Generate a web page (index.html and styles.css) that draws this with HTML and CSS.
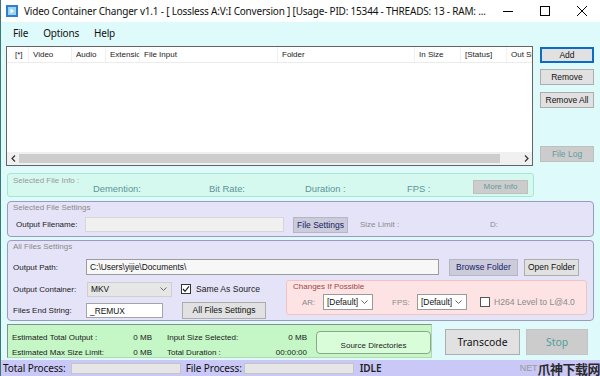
FILE: index.html
```html
<!DOCTYPE html>
<html>
<head>
<meta charset="utf-8">
<title>Video Container Changer</title>
<link rel="stylesheet" href="styles.css">
</head>
<body>
<div class="window">
  <div class="titlebar">
    <svg class="appicon" width="12" height="12" viewBox="0 0 12 12"><rect x="0" y="0" width="12" height="12" fill="#2f7fcf"/><rect x="2" y="2" width="8" height="8" fill="#9ad6f2"/><path d="M4.5 3.5 L8 6 L4.5 8.5 Z" fill="#ffffff"/></svg>
    <span class="title">Video Container Changer v1.1 - [ Lossless A:V:I Conversion ] [Usage- PID: 15344 - THREADS: 13 - RAM: ...</span>
    <div class="winctl">
      <span class="wbtn"><svg width="10" height="10" viewBox="0 0 10 10"><path d="M0 5.5 H10" stroke="#000" stroke-width="1"/></svg></span>
      <span class="wbtn"><svg width="10" height="10" viewBox="0 0 10 10"><rect x="0.5" y="0.5" width="9" height="9" fill="none" stroke="#000" stroke-width="1"/></svg></span>
      <span class="wbtn"><svg width="10" height="10" viewBox="0 0 10 10"><path d="M0 0 L10 10 M10 0 L0 10" stroke="#000" stroke-width="1"/></svg></span>
    </div>
  </div>
  <div class="menubar"><span>File</span><span>Options</span><span>Help</span></div>
  <div class="client">
    <div class="toprow">
      <div class="listview">
        <div class="lvhead">
          <span class="col c1">[*]</span>
          <span class="col c2">Video</span>
          <span class="col c3">Audio</span>
          <span class="col c4">Extension</span>
          <span class="col c5">File Input</span>
          <span class="col c6">Folder</span>
          <span class="col c7">In Size</span>
          <span class="col c8">[Status]</span>
          <span class="col c9">Out Size</span>
        </div>
        <div class="lvbody"></div>
        <div class="hscroll">
          <span class="arr"><svg width="5" height="7" viewBox="0 0 5 7"><path d="M4 0.5 L1 3.5 L4 6.5" fill="none" stroke="#333" stroke-width="1.2"/></svg></span>
          <div class="thumb"></div>
          <div class="track"></div>
          <span class="arr"><svg width="5" height="7" viewBox="0 0 5 7"><path d="M1 0.5 L4 3.5 L1 6.5" fill="none" stroke="#333" stroke-width="1.2"/></svg></span>
        </div>
      </div>
      <div class="sidebtns">
        <button class="btn focus b-add">Add</button>
        <button class="btn b-remove">Remove</button>
        <button class="btn b-removeall">Remove All</button>
        <button class="btn off b-filelog">File Log</button>
      </div>
    </div>

    <div class="infobox">
      <span class="gtitle info-title">Selected File Info :</span>
      <span class="infolbl w-dem">Demention:</span>
      <span class="infolbl w-bit">Bit Rate:</span>
      <span class="infolbl w-dur">Duration :</span>
      <span class="infolbl w-fps">FPS :</span>
      <button class="btn off moreinfo">More Info</button>
    </div>

    <div class="lavbox sfs">
      <div class="gtitle">Selected File Settings</div>
      <div class="row sfs-row">
        <span class="lbl w-ofn">Output Filename:</span>
        <span class="input disabled ofn"></span>
        <button class="btn navy b-fs">File Settings</button>
        <span class="lbl dim w-size">Size Limit :</span>
        <span class="lbl dim">D:</span>
      </div>
    </div>

    <div class="lavbox afs">
      <div class="gtitle">All Files Settings</div>
      <div class="row r-path">
        <span class="lbl w-lab">Output Path:</span>
        <span class="input path">C:\Users\yijie\Documents\</span>
        <button class="btn navy b-browse">Browse Folder</button>
        <button class="btn b-open">Open Folder</button>
      </div>
      <div class="lower">
        <div class="leftcol">
          <div class="row r-cont">
            <span class="lbl w-lab2">Output Container:</span>
            <span class="select flat mkv"><span>MKV</span><svg width="7" height="4" viewBox="0 0 7 4"><path d="M0.5 0.5 L3.5 3.5 L6.5 0.5" fill="none" stroke="#666" stroke-width="1"/></svg></span>
            <span class="check checked"><svg width="8" height="8" viewBox="0 0 8 8"><path d="M1 4 L3 6.3 L7 1.3" fill="none" stroke="#222" stroke-width="1.2"/></svg></span>
            <span class="lbl big">Same As Source</span>
          </div>
          <div class="row r-end">
            <span class="lbl w-lab">Files End String:</span>
            <span class="input endstr">_REMUX</span>
            <button class="btn b-allfs">All Files Settings</button>
          </div>
        </div>
        <div class="pinkbox">
          <div class="ptitle">Changes If Possible</div>
          <div class="row prow">
            <span class="lbl gray w-ar">AR:</span>
            <span class="select def"><span>[Default]</span><svg width="7" height="4" viewBox="0 0 7 4"><path d="M0.5 0.5 L3.5 3.5 L6.5 0.5" fill="none" stroke="#666" stroke-width="1"/></svg></span>
            <span class="lbl gray w-fps2">FPS:</span>
            <span class="select def"><span>[Default]</span><svg width="7" height="4" viewBox="0 0 7 4"><path d="M0.5 0.5 L3.5 3.5 L6.5 0.5" fill="none" stroke="#666" stroke-width="1"/></svg></span>
            <span class="check h264"></span>
            <span class="lbl gray big">H264 Level to L@4.0</span>
          </div>
        </div>
      </div>
    </div>

    <div class="bottomrow">
      <div class="greenbox">
        <div class="stats">
          <div class="srow"><span class="sl">Estimated Total Output :</span><span class="sv">0 MB</span><span class="sl2">Input Size Selected:</span><span class="sv2">0 MB</span></div>
          <div class="srow"><span class="sl">Estimated Max Size Limit:</span><span class="sv">0 MB</span><span class="sl2">Total Duration :</span><span class="sv2">00:00:00</span></div>
        </div>
        <button class="srcdir">Source Directories</button>
      </div>
      <button class="bigbtn transcode">Transcode</button>
      <button class="bigbtn stop">Stop</button>
    </div>
  </div>
  <div class="statusbar">
    <span class="st">Total Process:</span>
    <span class="prog"></span>
    <span class="st st2">File Process:</span>
    <span class="prog"></span>
    <span class="st idle">IDLE</span>
    <span class="net">NET</span><span class="wm">爪神下载网</span>
  </div>
</div>
</body>
</html>
```

FILE: styles.css
```css
* { box-sizing: border-box; }
html, body { margin: 0; padding: 0; }
body { width: 600px; height: 376px; overflow: hidden; }

.window {
  width: 600px; height: 376px;
  background: #dffafa;
  border-left: 1px solid #3a7878;
  display: flex; flex-direction: column;
  font-family: "Liberation Sans", Arial, sans-serif;
  font-size: 8px; color: #1a1a1a;
  overflow: hidden;
}

/* title bar */
.titlebar { height: 22px; background: #fff; display: flex; align-items: center; flex: none; }
.appicon { margin-left: 5px; flex: none; }
.title { margin-left: 6px; font-family: "Noto Sans", sans-serif; font-size: 10px; color: #111; white-space: nowrap; letter-spacing: -0.2px; }
.winctl { margin-left: auto; display: flex; height: 22px; }
.wbtn { width: 37px; display: flex; align-items: center; justify-content: center; }

/* menu */
.menubar { height: 21px; display: flex; align-items: center; gap: 15px; padding-left: 12px; font-family: "Noto Sans", sans-serif; font-size: 10px; color: #111; flex: none; letter-spacing: -0.2px; }

.client { padding: 3px 6px 0 5px; flex: none; }

/* list */
.toprow { display: flex; height: 120px; }
.listview { width: 527px; height: 120px; border: 1px solid #646464; background: #fff; display: flex; flex-direction: column; }
.lvhead { height: 16px; display: flex; align-items: center; border-bottom: 1px solid #ececec; flex: none; overflow: hidden; }
.col { white-space: nowrap; overflow: hidden; padding-left: 4px; height: 16px; line-height: 16px; border-right: 1px solid #f0f0f0; font-size: 8px; color: #222; flex: none; }
.c1 { width: 22px; padding-left: 8px; }
.c2 { width: 43px; }
.c3 { width: 34px; }
.c4 { width: 34px; padding-right: 1px; }
.c5 { width: 138px; }
.c6 { width: 137px; }
.c7 { width: 46px; }
.c8 { width: 46px; }
.c9 { width: 25px; border-right: none; }
.lvbody { flex: 1; }
.hscroll { height: 13px; display: flex; align-items: stretch; background: #f0f0f0; flex: none; }
.hscroll .arr { width: 12px; display: flex; align-items: center; justify-content: center; }
.hscroll .thumb { width: 481px; margin: 2px 0; background: #cdcdcd; }
.hscroll .track { flex: 1; }

.sidebtns { margin-left: 7px; width: 54px; display: flex; flex-direction: column; }

.btn {
  font-family: "Liberation Sans", Arial, sans-serif; font-size: 8.5px; color: #111;
  background: #e1e1e1; border: 1px solid #adadad; padding: 0; margin: 0;
  height: 16px; line-height: 14px; text-align: center; white-space: nowrap;
}
.btn.focus { border: 1px solid #0a6cc4; box-shadow: inset 0 0 0 1px #0a6cc4; }
.btn.off { background: #cccccc; border-color: #bfbfbf; color: #5f9c9c; }
.btn.navy { background: #cbcbd9; border-color: #b5b5c8; color: #16206a; }
.b-add { margin-top: 1px; }
.b-remove { margin-top: 6px; }
.b-removeall { margin-top: 7px; }
.b-filelog { margin-top: 38px; }

/* info box */
.infobox {
  margin: 7px 0 0 1px; width: 527px; height: 24px;
  background: #d5f8ef; border: 1px solid #a6e6d3; border-radius: 3px;
  display: flex; align-items: flex-start;
}
.gtitle { font-size: 8px; color: #8a8a8a; line-height: 10px; }
.info-title { margin: 2px 0 0 5px; width: 80px; color: #9a9a9a; }
.infolbl { margin-top: 9px; font-size: 9.4px; color: #5b9696; line-height: 11px; white-space: nowrap; }
.w-dem { width: 116px; }
.w-bit { width: 96px; }
.w-dur { width: 102px; }
.w-fps { width: 66px; }
.moreinfo { margin-top: 6px; width: 55px; height: 14px; line-height: 12px; color: #a8a8a8; font-size: 8px; border-color: #c9c9c9; }

/* lavender group boxes */
.lavbox {
  margin-left: 1px; width: 587px;
  background: #e5e3f8; border: 1px solid #9d9bbd; border-radius: 4px;
  padding: 1px 0 0 5px;
}
.sfs { margin-top: 4px; height: 36px; }
.afs { margin-top: 3px; height: 81px; }
.row { display: flex; align-items: center; }
.lbl { white-space: nowrap; font-size: 8px; color: #1a1a1a; }
.lbl.dim { color: #8a8a8a; }
.lbl.gray { color: #8a8a8a; }
.lbl.big { font-size: 8.6px; }
.sfs-row { margin-top: 3px; height: 17px; padding-left: 3px; }
.w-ofn { width: 69px; }
.input {
  display: flex; align-items: center; height: 15px; padding-left: 3px;
  background: #fff; border: 1px solid #a5a5a5; font-size: 8.4px; color: #111; white-space: nowrap;
}
.input.disabled { background: #f0f0f0; border-color: #d6d6d6; }
.ofn { width: 199px; }
.b-fs { margin-left: 9px; width: 55px; height: 16px; }
.w-size { margin-left: 12px; width: 130px; }

.r-path { margin-top: 7px; height: 16px; }
.w-lab { width: 73px; }
.w-lab2 { width: 74px; }
.path { width: 353px; height: 16px; background: #f7f7f7; border-color: #9c9c9c; }
.b-browse { margin-left: 10px; width: 69px; height: 17px; }
.b-open { margin-left: 6px; width: 55px; height: 17px; }

.lower { display: flex; margin-top: 5px; }
.leftcol { width: 273px; display: flex; flex-direction: column; }
.r-cont { height: 16px; margin-top: 1px; }
.select {
  display: flex; align-items: center; justify-content: space-between;
  height: 15px; padding: 0 4px 0 3px; border: 1px solid #9a9a9a; background: #fff;
  font-size: 8.4px; color: #111;
}
.select.flat { background: #e6e6e6; border-color: #cfcfcf; }
.mkv { width: 85px; }
.check { width: 10px; height: 10px; border: 1px solid #333; background: #fff; display: flex; align-items: center; justify-content: center; flex: none; }
.r-cont .check { margin-left: 9px; margin-right: 5px; }
.r-end { margin-top: 5px; height: 17px; }
.endstr { width: 77px; height: 15px; }
.b-allfs { margin-left: 19px; width: 84px; height: 17px; line-height: 15px; }

.pinkbox {
  margin-left: 0; width: 301px; height: 35px;
  background: #fde3e3; border: 1px solid #f0c4c4; border-radius: 3px;
  padding: 1px 0 0 6px;
}
.ptitle { font-size: 8px; color: #9c4848; line-height: 10px; }
.prow { margin-top: 2px; height: 16px; padding-left: 9px; }
.w-ar { width: 21px; }
.def { width: 50px; height: 16px; }
.w-fps2 { width: 25px; margin-left: 19px; }
.h264 { margin-left: 13px; margin-right: 4px; border-color: #555; }

/* bottom */
.bottomrow { display: flex; align-items: flex-start; margin-top: 3px; margin-left: 1px; height: 34px; }
.greenbox {
  width: 425px; height: 34px; background: #c5f6c5;
  border: 1px solid #b4d8b4; border-top-color: #8c8c8c; border-left-color: #8c8c8c;
  display: flex; align-items: flex-start;
}
.stats { width: 300px; padding: 5px 0 0 4px; }
.srow { display: flex; height: 15px; align-items: center; font-size: 8px; }
.sl { width: 104px; white-space: nowrap; }
.sv { width: 36px; text-align: right; }
.sl2 { width: 108px; margin-left: 15px; white-space: nowrap; }
.sv2 { width: 32px; text-align: right; white-space: nowrap; }
.srcdir {
  margin: 6px 0 0 8px; width: 115px; height: 23px;
  background: #d9fdd9; border: 1px solid #8aa88a; border-radius: 4px;
  font-family: "Liberation Sans", Arial, sans-serif; font-size: 8px; color: #222;
  display: flex; align-items: flex-end; justify-content: center; padding: 0 0 3px 0;
}
.bigbtn {
  margin-top: 5px; height: 26px; padding: 0;
  font-family: "Noto Sans", sans-serif; font-size: 10.4px;
}
.transcode { margin-left: 13px; width: 75px; background: #e1e1e1; border: 1px solid #adadad; color: #111; }
.stop { margin-left: 6px; width: 62px; background: #cccccc; border: 1px solid #c4c4c4; color: #4f9f9f; }

/* status bar */
.statusbar {
  margin-top: auto; height: 16px; background: #c9c8f6;
  display: flex; align-items: center; padding-left: 2px;
  font-family: "Noto Sans", sans-serif; font-size: 10px; color: #111; white-space: nowrap; letter-spacing: -0.1px;
}
.st { width: 69px; }
.st2 { margin-left: 5px; width: 59px; }
.prog { width: 112px; height: 11px; background: #e6e6e6; border: 1px solid #c4c4c4; }
.idle { margin-left: 6px; width: 163px; font-weight: 600; color: #222; }
.net { color: #9a9a9a; font-size: 9px; font-family: "Liberation Sans", sans-serif; }
.wm { font-family: "Noto Sans CJK SC", sans-serif; font-weight: 700; font-size: 13px; color: #2a2a2a; letter-spacing: -0.5px; }
```
